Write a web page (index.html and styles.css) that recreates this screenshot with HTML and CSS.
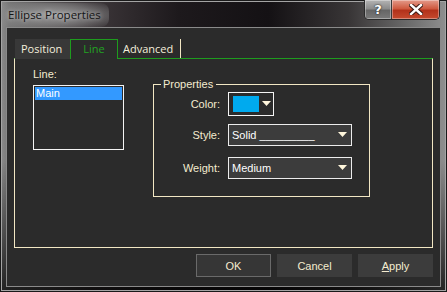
FILE: index.html
```html
<!doctype html>
<html lang="en">
<head>
    <meta charset="UTF-8" />
    <title>Ellipse Properties</title>
    <link rel="stylesheet" href="styles.css">
</head>
<body>
    <div class="window">
        <div class="titlebar">
            <span class="title">Ellipse Properties</span>
            <div class="caption-buttons">
                <div class="cap-btn help">?</div>
                <div class="cap-btn close">
                    <svg width="14" height="11" viewBox="0 0 14 11">
                        <path d="M2 1 L12 10 M12 1 L2 10" stroke="#3a1a14" stroke-width="4.4" stroke-linecap="square" />
                        <path d="M2 1 L12 10 M12 1 L2 10" stroke="#ffffff" stroke-width="2.4" stroke-linecap="square" />
                    </svg>
                </div>
            </div>
        </div>

        <div class="client">
            <div class="tabs">
                <div class="tab tab-position">Position</div>
                <div class="tab tab-active">Line</div>
                <div class="tab tab-last">Advanced</div>
            </div>

            <div class="panel">
                <div class="line-col">
                    <div class="field-label">Line:</div>
                    <div class="listbox">
                        <div class="list-item selected">Main</div>
                    </div>
                </div>

                <fieldset class="props">
                    <legend>Properties</legend>
                    <div class="row row-color">
                        <label>Color:</label>
                        <div class="color-pick">
                            <span class="swatch"></span>
                            <svg class="arrow" width="9" height="6" viewBox="0 0 9 6"><path d="M0 0 H9 L4.5 5 Z" fill="#fff6dc" /></svg>
                        </div>
                    </div>
                    <div class="row row-style">
                        <label>Style:</label>
                        <div class="select">
                            <span>Solid _________</span>
                            <svg class="arrow" width="9" height="6" viewBox="0 0 9 6"><path d="M0 0 H9 L4.5 5 Z" fill="#fff6dc" /></svg>
                        </div>
                    </div>
                    <div class="row">
                        <label>Weight:</label>
                        <div class="select">
                            <span>Medium</span>
                            <svg class="arrow" width="9" height="6" viewBox="0 0 9 6"><path d="M0 0 H9 L4.5 5 Z" fill="#fff6dc" /></svg>
                        </div>
                    </div>
                </fieldset>
            </div>

            <div class="buttons">
                <button class="btn btn-default">OK</button>
                <button class="btn">Cancel</button>
                <button class="btn"><u>A</u>pply</button>
            </div>
        </div>
    </div>
</body>
</html>
```

FILE: styles.css
```css
body {
    margin: 0;
    padding: 0;
    font-family: 'Liberation Sans', Arial, sans-serif;
    background-color: #1a1a1a;
}

.window {
    width: 447px;
    height: 292px;
    box-sizing: border-box;
    display: flex;
    flex-direction: column;
    background:
        linear-gradient(to bottom, rgba(0, 0, 0, 0) 0, rgba(0, 0, 0, 0) 55%, rgba(0, 0, 0, 0.75) 100%),
        linear-gradient(to right, #8e8e8e 0, #767676 2%, #3e383b 20%, #1d191c 40%, #141114 60%, #383536 78%, #6e6e6e 92%, #909090 100%);
    box-shadow: inset 0 0 0 1px #1a1a1a, inset 0 0 0 2px #a4a4a4;
}

/* Title bar */
.titlebar {
    height: 28px;
    display: flex;
    justify-content: space-between;
    align-items: flex-start;
}

.title {
    margin: 3px 0 0 1px;
    padding: 4px 8px 5px 7px;
    font-family: 'Open Sans', sans-serif;
    font-size: 11.5px;
    line-height: 15px;
    color: #141414;
    border-radius: 8px;
    background: radial-gradient(ellipse at center, rgba(170, 170, 170, 0.85) 0, rgba(140, 140, 140, 0.6) 55%, rgba(120, 120, 120, 0) 100%);
    text-shadow: 0 0 4px rgba(255, 255, 255, 0.6);
}

.caption-buttons {
    display: flex;
    margin-right: 7px;
    height: 19px;
    border: 1px solid #2a2a2a;
    border-top: none;
    border-radius: 0 0 5px 5px;
    overflow: hidden;
}

.cap-btn {
    display: flex;
    align-items: center;
    justify-content: center;
    height: 19px;
    box-sizing: border-box;
    box-shadow: inset 0 0 0 1px rgba(255, 255, 255, 0.35);
}

.help {
    width: 27px;
    background: linear-gradient(to bottom, #b4b4b4 0, #8c8c8c 45%, #666666 55%, #7a7a7a 100%);
    color: #ffffff;
    font-family: 'DejaVu Sans', sans-serif;
    font-weight: bold;
    font-size: 13px;
    text-shadow: 0 0 2px #222, 0 0 1px #222;
    border-right: 1px solid #3a3a3a;
}

.close {
    width: 47px;
    background: linear-gradient(to bottom, #e49a8a 0, #cf5a40 45%, #b3321b 55%, #c54a2e 100%);
}

/* Client area */
.client {
    margin: 0 7px;
    height: 258px;
    box-sizing: border-box;
    padding-top: 11px;
    background-color: #2b2b2b;
    box-shadow: 0 0 0 1px #8a8a8a;
    display: flex;
    flex-direction: column;
}

.tabs {
    display: flex;
    height: 19px;
    margin-left: 8px;
    align-items: flex-start;
}

.tab {
    position: relative;
    z-index: 1;
    height: 19px;
    box-sizing: border-box;
    font-family: 'Open Sans', sans-serif;
    font-size: 11px;
    line-height: 19px;
    color: #f4efdc;
}

.tab-position {
    width: 55px;
    height: 20px;
    margin-bottom: -1px;
    padding-left: 6px;
    background-color: #383838;
}

.tab-active {
    width: 48px;
    height: 20px;
    margin-bottom: -1px;
    border: 1px solid #1e9c1e;
    border-bottom: none;
    background-color: #2b2b2b;
    color: #22a322;
    text-align: center;
    line-height: 17px;
}

.tab-last {
    width: 63px;
    padding-left: 5px;
    border-right: 1px solid #f2e7c4;
}

.panel {
    margin-left: 7px;
    width: 419px;
    height: 190px;
    box-sizing: border-box;
    border: 1px solid #f2e7c4;
    border-top-color: #1e9c1e;
    padding: 9px 0 0 18px;
    display: flex;
    gap: 29px;
    align-items: flex-start;
}

.field-label {
    font-size: 11px;
    line-height: 13px;
    color: #f4ecd0;
    margin-bottom: 4px;
}

.listbox {
    width: 91px;
    height: 65px;
    box-sizing: border-box;
    border: 1px solid #f4f4f4;
    padding: 1px;
    background-color: #2b2b2b;
}

.list-item {
    height: 13px;
    padding-left: 1px;
    font-size: 11px;
    line-height: 13px;
    color: #ffffff;
}

.selected {
    background-color: #3399ff;
}

/* Properties group */
.props {
    margin: 10px 0 0 0;
    width: 217px;
    height: 119px;
    box-sizing: border-box;
    border: 1px solid #f2e7c4;
    padding: 1px 0 0 0;
}

.props legend {
    margin-left: 7px;
    padding: 0 3px 0 2px;
    font-size: 11px;
    line-height: 13px;
    color: #f4ecd0;
}

.row {
    display: flex;
    align-items: center;
    gap: 8px;
}

.row-color {
    margin-bottom: 8px;
}

.row-style {
    margin-bottom: 11px;
}

.row label {
    width: 66px;
    text-align: right;
    font-size: 11px;
    color: #f4ecd0;
}

.color-pick {
    width: 46px;
    height: 24px;
    box-sizing: border-box;
    border: 1px solid #f4f4f4;
    display: flex;
    align-items: center;
    padding-left: 4px;
    gap: 3px;
}

.swatch {
    width: 26px;
    height: 16px;
    background-color: #00aaee;
}

.select {
    width: 124px;
    height: 22px;
    box-sizing: border-box;
    border: 1px solid #ececec;
    background-color: #3c3c3c;
    display: flex;
    align-items: center;
    justify-content: space-between;
    padding: 0 4px 0 3px;
    font-size: 11px;
    color: #ffffff;
}

/* Bottom buttons */
.buttons {
    display: flex;
    justify-content: flex-end;
    gap: 6px;
    margin-top: 6px;
    padding-right: 7px;
}

.btn {
    width: 75px;
    height: 23px;
    border: 1px solid #3c3c3c;
    background-color: #3c3c3c;
    color: #f4ecd0;
    font-family: 'Liberation Sans', Arial, sans-serif;
    font-size: 11px;
    padding: 0;
}

.btn-default {
    border-color: #6a6a6a;
    background-color: #363636;
}
```
